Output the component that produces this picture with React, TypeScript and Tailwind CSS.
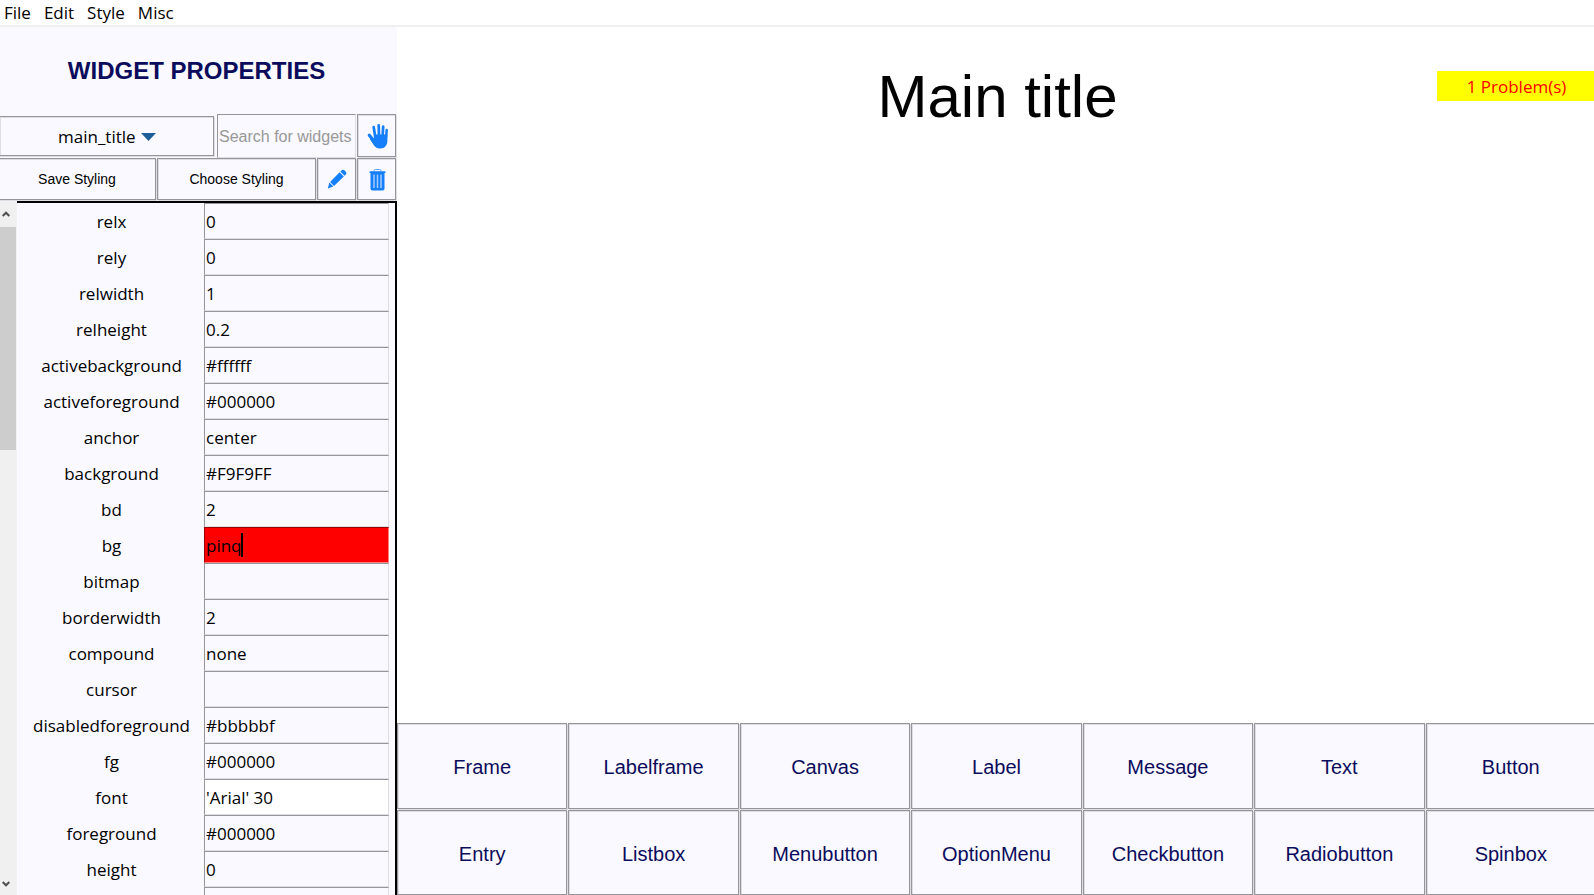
import { useState } from "react";

const groove =
  "border border-[#95959a] bg-[#f9f9ff] shadow-[inset_1px_1px_0_#dedee4,1px_1px_0_#dedee4]";

const uiFont = "font-['Open_Sans','Noto_Sans',sans-serif]";

type Property = { name: string; value: string; tone?: "error" | "active" };

const properties: Property[] = [
  { name: "relx", value: "0" },
  { name: "rely", value: "0" },
  { name: "relwidth", value: "1" },
  { name: "relheight", value: "0.2" },
  { name: "activebackground", value: "#ffffff" },
  { name: "activeforeground", value: "#000000" },
  { name: "anchor", value: "center" },
  { name: "background", value: "#F9F9FF" },
  { name: "bd", value: "2" },
  { name: "bg", value: "pinq", tone: "error" },
  { name: "bitmap", value: "" },
  { name: "borderwidth", value: "2" },
  { name: "compound", value: "none" },
  { name: "cursor", value: "" },
  { name: "disabledforeground", value: "#bbbbbf" },
  { name: "fg", value: "#000000" },
  { name: "font", value: "'Arial' 30", tone: "active" },
  { name: "foreground", value: "#000000" },
  { name: "height", value: "0" },
];

const widgets = [
  "Frame",
  "Labelframe",
  "Canvas",
  "Label",
  "Message",
  "Text",
  "Button",
  "Entry",
  "Listbox",
  "Menubutton",
  "OptionMenu",
  "Checkbutton",
  "Radiobutton",
  "Spinbox",
];

const fieldTone = {
  normal:
    "bg-[#f9f9ff] border-t-[#95959a] border-l-[#95959a] border-r-[#dedee4] border-b-[#dedee4]",
  active:
    "bg-white border-t-[#95959a] border-l-[#95959a] border-r-[#dedee4] border-b-[#dedee4]",
  error:
    "bg-[#ff0000] border-t-[#990000] border-l-[#990000] border-r-[#ff7f7f] border-b-[#ff7f7f]",
};

function HandIcon() {
  return (
    <svg width="22" height="26" viewBox="0 0 22 26" aria-hidden="true">
      <g stroke="#147efb" strokeLinecap="round" fill="none">
        <path d="M8.300 14 6.700 4.200" strokeWidth="2.700" />
        <path d="M12 13 11.700 2.300" strokeWidth="2.700" />
        <path d="M15.600 13 16.200 3.700" strokeWidth="2.700" />
        <path d="M19 15 19.700 7" strokeWidth="2.500" />
        <path d="M2.300 12.300 6.500 17.500" strokeWidth="3.200" />
      </g>
      <path
        fill="#147efb"
        d="M6.900 11.500h13.500v6c0 4.700-2.500 8-7.200 8-3.300 0-5.200-1.400-6.700-3.800L2.800 16l4.100-.5z"
      />
    </svg>
  );
}

function PencilIcon() {
  return (
    <svg width="20" height="20" viewBox="0 0 20 20" aria-hidden="true">
      <g fill="#147efb">
        <path d="M14.500 1.400c.8-.8 2-.9 2.900-.1l1.400 1.400c.8.9.7 2 0 2.800l-1.200 1.200-4.300-4.100z" />
        <path d="M12.600 3.300 16.800 7.400 7 17 3.100 12.900z" />
        <path d="M2.400 13.600 6.300 17.600.8 19.400z" />
      </g>
    </svg>
  );
}

function TrashIcon() {
  return (
    <svg width="17" height="22" viewBox="0 0 17 22" aria-hidden="true">
      <path
        d="M5 2.500V1.700c0-.7.500-1.200 1.200-1.200h4.600c.7 0 1.200.5 1.200 1.200v.8"
        fill="none"
        stroke="#5ba5fc"
      />
      <path fill="#147efb" d="M1.500 2.200h14c.6 0 1 .4 1 1V4H.5v-.8c0-.6.4-1 1-1z" />
      <path
        fill="#147efb"
        d="M1.500 4h14v15.500c0 1.300-.8 2-2 2h-10c-1.200 0-2-.7-2-2z"
      />
      <path d="M5 5.500v13.500M8.500 5.500v13.500M12 5.500v13.500" stroke="#a3ccfd" strokeWidth="1.500" />
    </svg>
  );
}

function PropertyRow({ name, value, tone }: Property) {
  const [text, setText] = useState(value);
  const id = `property-${name}`;
  return (
    <div className="flex h-9 shrink-0">
      <label
        htmlFor={id}
        className="flex w-[187px] shrink-0 items-center justify-center pt-0.5 pl-0.5"
      >
        {name}
      </label>
      <div className="relative min-w-0 flex-1">
        <input
          id={id}
          value={text}
          onChange={(event) => setText(event.target.value)}
          className={`h-full w-full border px-px outline-none ${fieldTone[tone ?? "normal"]}`}
        />
        {tone === "error" && (
          <span className="absolute top-1.5 left-[37px] h-6 w-0.5 bg-black" />
        )}
      </div>
    </div>
  );
}

export default function App() {
  return (
    <div
      className={`flex h-screen flex-col overflow-hidden bg-white text-[17px] text-black ${uiFont}`}
    >
      <nav className="flex h-[27px] shrink-0 items-center gap-[13px] border-b-2 border-[#f0f0f0] px-1">
        <button>File</button>
        <button>Edit</button>
        <button>Style</button>
        <button>Misc</button>
      </nav>

      <div className="flex min-h-0 flex-1">
        <aside className="flex w-[397px] shrink-0 flex-col overflow-hidden bg-[#f9f9ff]">
          <h1 className="flex h-[87px] shrink-0 items-center justify-center pr-1 font-['Liberation_Sans',sans-serif] text-2xl font-bold text-[#0c0c5c]">
            WIDGET PROPERTIES
          </h1>

          <div className="flex h-11 shrink-0 items-center gap-px pr-px">
            <div className="relative mr-0.5 -ml-px h-10 flex-1">
              <select
                aria-label="Selected widget"
                className={`h-full w-full appearance-none pt-0.5 pl-[58px] outline-none ${groove}`}
              >
                <option>main_title</option>
              </select>
              <svg
                className="pointer-events-none absolute top-[17px] left-[142px]"
                width="15"
                height="8"
                viewBox="0 0 15 8"
                aria-hidden="true"
              >
                <path d="M0 0h15L7.500 8z" fill="#1f5f99" />
              </svg>
            </div>
            <input
              aria-label="Search for widgets"
              placeholder="Search for widgets"
              className="h-11 w-[139px] border border-t-[#95959a] border-r-[#dedee4] border-b-[#dedee4] border-l-[#95959a] px-px pt-0.5 font-['Liberation_Sans',sans-serif] text-base outline-none placeholder:text-[#989898]"
            />
            <button
              aria-label="Pick widget"
              className={`flex h-[43px] w-[39px] items-center justify-center self-start pl-0.5 ${groove}`}
            >
              <HandIcon />
            </button>
          </div>

          <div className="flex h-[43px] shrink-0 items-start gap-px pr-px font-['Liberation_Sans',sans-serif] text-sm">
            <button className={`-ml-1 h-[42px] w-40 pl-0.5 ${groove}`}>
              Save Styling
            </button>
            <button className={`h-[42px] flex-1 ${groove}`}>
              Choose Styling
            </button>
            <button
              aria-label="Edit styling"
              className={`flex h-[42px] w-[39px] items-center justify-center ${groove}`}
            >
              <PencilIcon />
            </button>
            <button
              aria-label="Delete widget"
              className={`flex h-[42px] w-[39px] items-center justify-center pt-0.5 pl-0.5 ${groove}`}
            >
              <TrashIcon />
            </button>
          </div>

          <div className="flex min-h-0 flex-1">
            <div className="flex w-[17px] shrink-0 flex-col bg-[#f0f0f0] pr-px">
              <button
                aria-label="Scroll up"
                className="flex h-[26px] items-center justify-center pr-1"
              >
                <svg width="8" height="6" viewBox="0 0 8 6" fill="none">
                  <path d="M.7 5 4 1.700 7.300 5" stroke="#505050" strokeWidth="2" />
                </svg>
              </button>
              <div className="min-h-0 flex-1">
                <div className="h-[223px] bg-[#cdcdcd]" />
              </div>
              <button
                aria-label="Scroll down"
                className="flex h-6 items-center justify-center pt-0.5 pr-1"
              >
                <svg width="8" height="6" viewBox="0 0 8 6" fill="none">
                  <path d="M.7 1 4 4.300 7.300 1" stroke="#505050" strokeWidth="2" />
                </svg>
              </button>
            </div>
            <div className="flex min-w-0 flex-1 flex-col overflow-hidden border-t-2 border-r-2 border-black pr-1.5">
              {properties.map((property) => (
                <PropertyRow key={property.name} {...property} />
              ))}
              <div className="ml-[187px] h-9 shrink-0 border border-t-[#95959a] border-r-[#dedee4] border-l-[#95959a]" />
            </div>
          </div>
        </aside>

        <main className="relative flex min-w-0 flex-1 flex-col overflow-hidden">
          <section className="flex-1">
            <div className="flex h-1/5 items-center justify-center pl-1 font-['Liberation_Sans',sans-serif] text-6xl">
              Main title
            </div>
          </section>
          <button className="absolute top-11 right-0 h-[30px] w-[157px] bg-[#ffff00] pt-0.5 pl-0.5 text-[#ff0000]">
            1 Problem(s)
          </button>
          <section className="-mr-0.5 grid shrink-0 grid-cols-7 grid-rows-[86px_85px] gap-px font-['Liberation_Sans',sans-serif] text-xl text-[#0c0c5c]">
            {widgets.map((widget) => (
              <button key={widget} className={`pt-0.5 ${groove}`}>
                {widget}
              </button>
            ))}
          </section>
        </main>
      </div>
    </div>
  );
}
